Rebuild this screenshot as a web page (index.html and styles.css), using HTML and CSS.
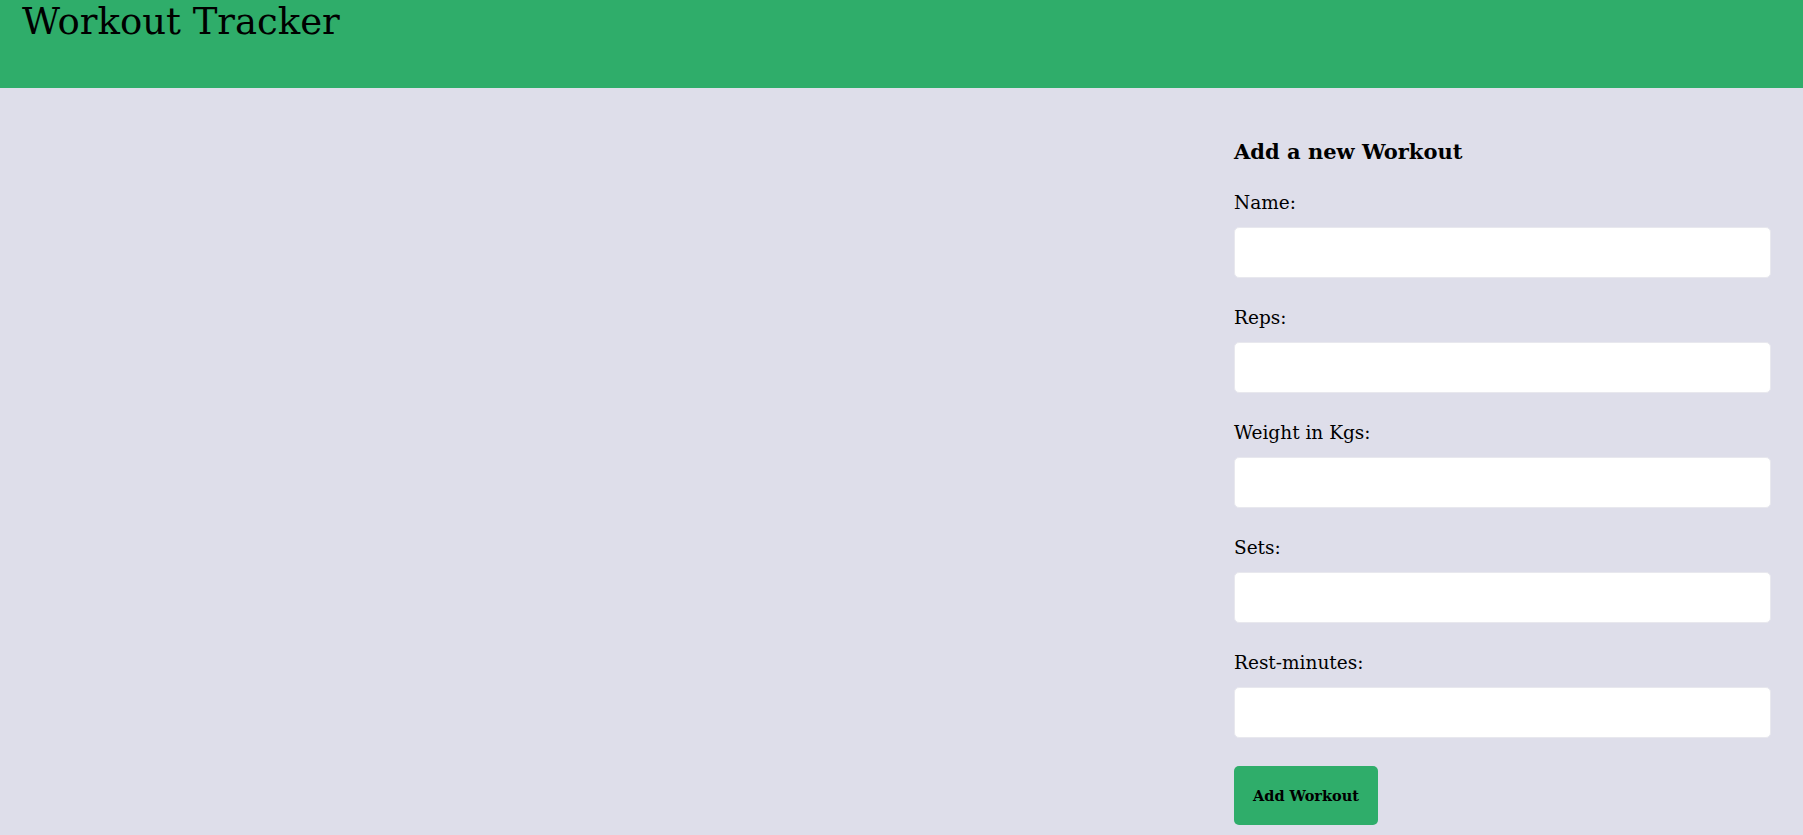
FILE: index.html
```html
<!DOCTYPE html>
<html lang="en">
<head>
    <meta charset="UTF-8">
    <meta name="viewport" content="width=device-width, initial-scale=1.0">
    <title>Workout Tracker</title>
    <link rel="stylesheet" href="styles.css">
</head>
<body>
    <header class="header">
        <h1 class="title">Workout Tracker</h1>
    </header>
    <main class="main">
        <section class="workouts" id="workouts"></section>
        <form class="workout-form" id="workout-form">
            <h2 class="form-title">Add a new Workout</h2>
            <label class="label" for="name">Name:</label>
            <input class="input" type="text" id="name">
            <label class="label" for="reps">Reps:</label>
            <input class="input" type="number" id="reps">
            <label class="label" for="weight">Weight in Kgs:</label>
            <input class="input" type="number" id="weight">
            <label class="label" for="sets">Sets:</label>
            <input class="input" type="number" id="sets">
            <label class="label" for="rest">Rest-minutes:</label>
            <input class="input" type="number" id="rest">
            <button class="button" type="submit">Add Workout</button>
        </form>
    </main>
</body>
</html>
```

FILE: styles.css
```css
html {
    background-color: #dedeea;
}
body {
    margin: 0;
    font-family: "DejaVu Serif", "Liberation Serif", serif;
    color: #000;
    background-color: #dedeea;
}
.header {
    height: 88px;
    background-color: #2fad6a;
    padding-left: 22px;
}
.title {
    margin: 0;
    font-size: 37px;
    line-height: 44px;
    font-weight: normal;
}
.main {
    display: grid;
    grid-template-columns: 2fr 1fr;
}
.workout-form {
    display: flex;
    flex-direction: column;
    align-items: flex-start;
    padding: 49px 32px 0 32px;
}
.form-title {
    margin: 0 0 24px 0;
    font-size: 21px;
    line-height: 30px;
}
.label {
    display: block;
    font-size: 18.5px;
    line-height: 24px;
    margin-bottom: 12px;
}
.input {
    box-sizing: border-box;
    width: 100%;
    height: 51px;
    margin: 0 0 28px 0;
    border: 1px solid #e8e8ee;
    border-radius: 5px;
    background-color: #fff;
    font-family: inherit;
    font-size: 16px;
    padding: 0 12px;
}
.button {
    height: 59px;
    padding: 0 19px;
    border: none;
    border-radius: 5px;
    background-color: #2fad6a;
    color: #000;
    font-family: inherit;
    font-size: 14.5px;
    font-weight: bold;
    cursor: pointer;
}
```
